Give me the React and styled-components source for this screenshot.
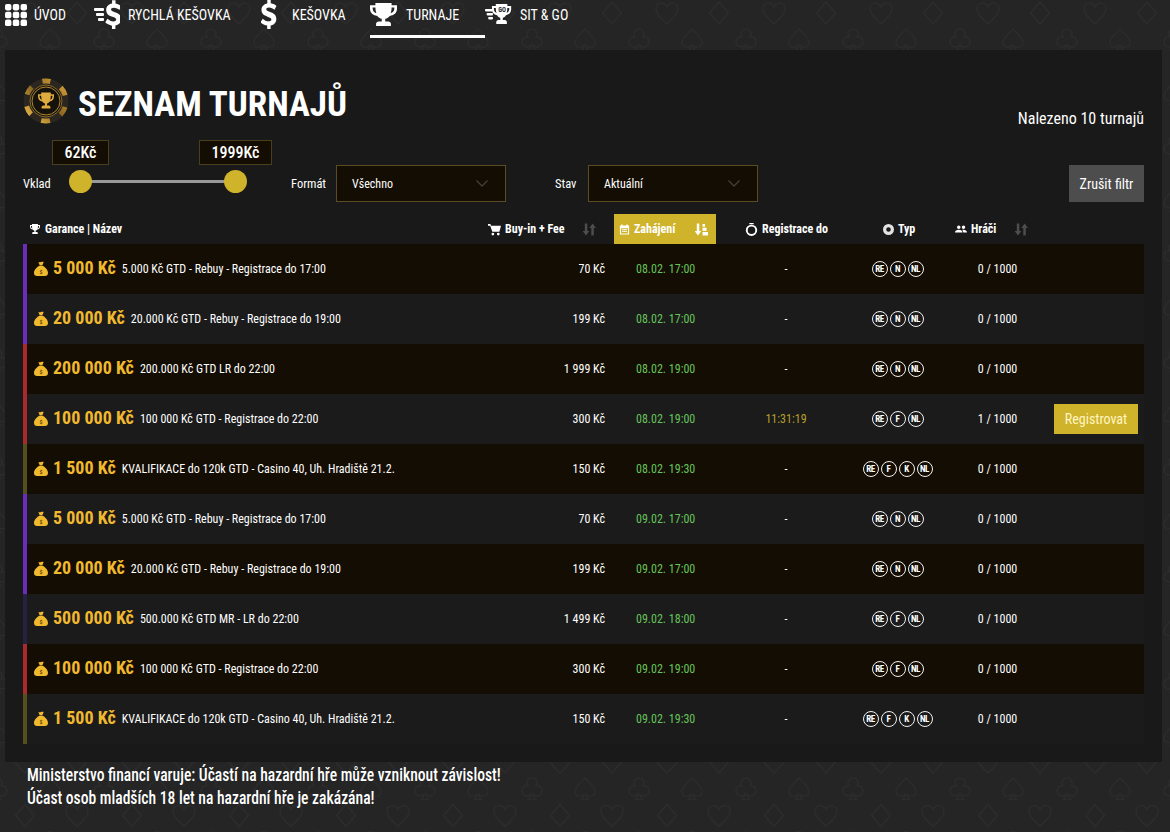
import React from "react";
import styled, { createGlobalStyle } from "styled-components";

const heart = "M0 11C-7 4-11 1-11-4.500c0-6 8-7.500 11-1.500 3-6 11-4.500 11 1.500C11 1 7 4 0 11z";
const diamond = "M0-11L9.500 0 0 11-9.500 0z";
const spade = "M0-11C4-6 10-3 10 2.500c0 5-6 6-9 3 0 2 1 4 2.500 5h-7C-2 9.500-1 7.500-1 5.500c-3 3-9 2-9-3C-10-3-4-6 0-11z";
const club = "M0-11a5 5 0 0 1 4 8 5 5 0 1 1-3 8c0 2 1 4 2.500 5.500h-7C-2 9-1 7-1 5a5 5 0 1 1-3-8 5 5 0 0 1 4-8z";

const suit = (d, x, y) => `<path transform='translate(${x} ${y})' d='${d}'/>`;
const pattern = encodeURIComponent(
	`<svg xmlns='http://www.w3.org/2000/svg' width='107' height='107' fill='none' stroke='#2c2c2c' stroke-width='1.2'>` +
	suit(heart, 25, 13) + suit(diamond, 77, 13) +
	suit(spade, 50, 40) + suit(club, 104, 40) + suit(club, -3, 40) +
	suit(diamond, 25, 66.5) + suit(heart, 77, 66.5) +
	suit(club, 50, 93.5) + suit(spade, 104, 93.5) + suit(spade, -3, 93.5) +
	`</svg>`
);

const GlobalStyle = createGlobalStyle`
	body {
		margin: 0;
		background: #252525 url("data:image/svg+xml,${pattern}");
		color: #fff;
		font-family: "Roboto", "Liberation Sans", sans-serif;
		font-stretch: 75%;
	}
`;

const Page = styled.div`
	width: 1170px;
	height: 832px;
	overflow: hidden;
`;

const Nav = styled.nav`
	display: flex;
	height: 38px;
	padding-left: 5px;
	margin-bottom: 12px;
`;

const NavItem = styled.a`
	display: flex;
	align-items: center;
	width: ${(p) => p.$w}px;
	height: 38px;
	gap: ${(p) => p.$gap}px;
	padding-bottom: 6px;
	box-sizing: border-box;
	font-size: 14px;
	white-space: nowrap;
	border-bottom: 3px solid ${(p) => (p.$active ? "#fff" : "transparent")};
`;

const Panel = styled.main`
	width: 1157px;
	height: 712px;
	margin-left: 5px;
	padding: 28px 18px 0;
	box-sizing: border-box;
	background: #191919;
`;

const TitleRow = styled.div`
	display: flex;
	align-items: center;
	justify-content: space-between;
	height: 50px;
`;

const Title = styled.h1`
	display: flex;
	align-items: center;
	gap: 9px;
	margin: 2px 0 0;
	font-size: 35px;
	font-weight: 700;
`;

const ChipWrap = styled.span`
	display: flex;
	margin-bottom: 6px;
`;

const Found = styled.div`
	margin-top: 30px;
	font-size: 16px;
`;

const Filters = styled.div`
	display: flex;
	align-items: flex-end;
	height: 62px;
	margin-top: 12px;
`;

const FilterLabel = styled.label`
	flex: none;
	width: ${(p) => p.$w}px;
	align-self: center;
	margin-top: 24px;
	font-size: 12.5px;
`;

const Slider = styled.div`
	position: relative;
	flex: none;
	width: 178px;
	height: 62px;
	margin-right: 44px;
`;

const Track = styled.div`
	position: absolute;
	left: 12px;
	right: 12px;
	top: 40px;
	height: 3px;
	background: #999;
`;

const Knob = styled.div`
	position: absolute;
	top: 30px;
	left: ${(p) => p.$x}px;
	width: 23px;
	height: 23px;
	border-radius: 50%;
	background: #cfb32b;
`;

const Bubble = styled.div`
	position: absolute;
	top: 0;
	left: ${(p) => p.$x}px;
	width: ${(p) => p.$w}px;
	height: 25px;
	box-sizing: border-box;
	border: 1px solid #4a3f1d;
	background: #140d03;
	font-size: 16px;
	font-weight: 500;
	line-height: 23px;
	text-align: center;
`;

const Select = styled.div`
	display: flex;
	align-items: center;
	justify-content: space-between;
	flex: none;
	width: 170px;
	height: 37px;
	box-sizing: border-box;
	margin-right: ${(p) => p.$mr}px;
	padding: 0 17px 0 15px;
	border: 1px solid #5a4c20;
	background: #140d03;
	font-size: 12px;
`;

const ClearButton = styled.button`
	margin-left: auto;
	width: 75px;
	height: 37px;
	border: 0;
	padding: 0;
	background: #4d4d4d;
	color: #fff;
	font: inherit;
	font-stretch: 75%;
	font-size: 14px;
`;

const columns = "463px 128px 102px 140px 85px 90px 1fr";

const HeadRow = styled.div`
	display: grid;
	grid-template-columns: ${columns};
	height: 30px;
	margin-top: 12px;
	font-size: 12px;
	font-weight: 700;
`;

const HeadCell = styled.div`
	display: flex;
	align-items: center;
	gap: 4px;
	padding-left: ${(p) => p.$pad || 0}px;
	background: ${(p) => (p.$active ? "#cfb32b" : "transparent")};
`;

const Sort = styled.span`
	display: flex;
	margin-left: auto;
	margin-right: ${(p) => p.$mr}px;
	color: ${(p) => (p.$active ? "#fff" : "#4d4d4d")};
`;

const Row = styled.div`
	display: grid;
	grid-template-columns: ${columns};
	align-items: center;
	height: 50px;
	box-sizing: border-box;
	border-left: 4px solid ${(p) => p.$accent};
	background: ${(p) => (p.$odd ? "#140d03" : "#1b1b1b")};
	font-size: 12px;
`;

const NameCell = styled.div`
	display: flex;
	align-items: center;
	padding-left: 6px;
	white-space: nowrap;
`;

const Guarantee = styled.span`
	margin: 0 6px 3px 4px;
	color: #f0b92e;
	font-size: 18px;
	font-weight: 700;
`;

const Price = styled.div`
	text-align: right;
	padding-right: 13px;
`;

const Start = styled.div`
	color: #66c45a;
	padding-left: 18px;
`;

const Deadline = styled.div`
	text-align: center;
	padding-right: 8px;
	color: ${(p) => (p.$live ? "#b89f2a" : "#fff")};
`;

const Badges = styled.div`
	display: flex;
	justify-content: center;
	gap: 2px;
	padding-right: 10px;
`;

const Badge = styled.span`
	display: flex;
	align-items: center;
	justify-content: center;
	width: 16px;
	height: 16px;
	box-sizing: border-box;
	border: 1.5px solid #f2f2f2;
	border-radius: 50%;
	font-size: 9px;
	font-weight: 700;
	letter-spacing: -0.4px;
`;

const Players = styled.div`
	text-align: center;
	padding-left: 15px;
`;

const RegisterCell = styled.div`
	display: flex;
	justify-content: flex-end;
	padding-right: 6px;
`;

const RegisterButton = styled.button`
	width: 84px;
	height: 30px;
	border: 0;
	background: #cfb32b;
	color: #fff6c4;
	font: inherit;
	font-stretch: 75%;
	font-size: 14px;
`;

const Warning = styled.p`
	width: 1000px;
	margin: 2px 0 0 27px;
	font-size: 18.5px;
	line-height: 23px;
	font-weight: 500;
	transform: scaleX(0.843);
	transform-origin: left;
`;

const Icon = ({ size = 16, children, viewBox = "0 0 24 24" }) => (
	<svg width={size} height={size} viewBox={viewBox} fill="currentColor" style={{ flex: "none" }}>
		{children}
	</svg>
);

const trophyPath = "M6 2h12v2h4v3c0 3.500-2.300 5.800-5.400 6.200-.8 1.300-2 2.200-3.300 2.500V18h2.200c1.200 0 2 1 2 2v2H6.500v-2c0-1 .8-2 2-2h2.200v-2.300c-1.300-.3-2.500-1.200-3.300-2.500C4.300 12.800 2 10.500 2 7V4h4V2zm0 4H4v1c0 1.900 1 3.300 2.700 3.900C6.200 9.500 6 7.800 6 6zm12 0c0 1.800-.2 3.500-.7 4.900C19 10.300 20 8.900 20 7V6h-2z";

const GridIcon = () => (
	<Icon size={22} viewBox="0 0 24 24">
		{[0, 8.500, 17].map((y) =>
			[0, 8.500, 17].map((x) => <rect key={`${x}-${y}`} x={x} y={y} width="7" height="7" rx="2" />)
		)}
	</Icon>
);

const dollarPath = "M10.500 1h3v2.600c2.300.3 4 1.200 5 2.200l-1.700 3c-1.200-1-2.900-1.800-4.800-1.800-1.600 0-2.400.6-2.400 1.400 0 1 1.100 1.400 3.300 2.100 3.400 1 5.500 2.400 5.500 5.500 0 2.800-2 4.700-5 5.200V24h-3v-2.700c-2.400-.3-4.500-1.300-5.800-2.600l1.900-2.900c1.400 1.200 3.300 2.100 5.100 2.100 1.700 0 2.500-.6 2.500-1.500 0-1-1-1.500-3.400-2.200-3.200-.9-5.300-2.300-5.300-5.400 0-2.700 2-4.600 5.100-5.100V1z";

const SpeedLines = () => (
	<g>
		<rect x="0" y="0" width="10" height="3" rx="1" />
		<rect x="2" y="5" width="8" height="3" rx="1" />
		<rect x="4" y="10" width="6" height="3" rx="1" />
	</g>
);

const FastCashIcon = () => (
	<svg width="26" height="29" viewBox="0 0 26 29" fill="currentColor" style={{ flex: "none" }}>
		<g transform="translate(6 -1) scale(1.150 1.250)"><path d={dollarPath} /></g>
		<g transform="translate(0 8)"><SpeedLines /></g>
	</svg>
);

const CashIcon = () => (
	<svg width="16" height="29" viewBox="5 1 14 23" preserveAspectRatio="none" fill="currentColor" style={{ flex: "none" }}>
		<path d={dollarPath} />
	</svg>
);

const NavTrophy = () => (
	<svg width="27" height="23" viewBox="2 2 20 20" preserveAspectRatio="none" fill="currentColor" style={{ flex: "none" }}>
		<path d={trophyPath} />
	</svg>
);

const TrophyIcon = ({ size = 12 }) => (
	<Icon size={size}><path d={trophyPath} /></Icon>
);

const SitGoIcon = () => (
	<svg width="27" height="22" viewBox="0 0 27 22" fill="currentColor" style={{ flex: "none" }}>
		<g transform="translate(6 0) scale(.96 1)"><path d={trophyPath} transform="translate(-1 -2)" /></g>
		<g transform="translate(0 5) scale(.8)"><SpeedLines /></g>
		<text x="17" y="7.500" fontSize="6.500" fontWeight="700" textAnchor="middle" fill="#252525">GO</text>
	</svg>
);

const ChipLogo = () => (
	<svg width="46" height="46" viewBox="0 0 46 46">
		<defs>
			<linearGradient id="chipGold" x1="0" y1="0" x2="1" y2="1">
				<stop offset="0" stopColor="#f0c04a" />
				<stop offset="0.5" stopColor="#8a6420" />
				<stop offset="1" stopColor="#d9a33a" />
			</linearGradient>
		</defs>
		<circle cx="23" cy="23" r="22.500" fill="#2b2620" />
		<circle cx="23" cy="23" r="20" fill="none" stroke="url(#chipGold)" strokeWidth="5" strokeDasharray="9 11.940" strokeDashoffset="4.500" transform="rotate(-90 23 23)" />
		<circle cx="23" cy="23" r="16" fill="#15110b" stroke="#8a6a26" strokeWidth="1" />
		<circle cx="23" cy="23" r="14" fill="none" stroke="#d3a53e" strokeWidth="0.800" />
		<g transform="translate(13.400 13) scale(.8)" fill="#e0ab3e"><path d={trophyPath} /></g>
	</svg>
);

const MoneyBag = () => (
	<Icon size={16}>
		<path fill="#f0b92e" d="M8 1.500c1 .7 2 .7 4 0s3-.5 4 0l-2 4.700h-4L8 1.500zM9.600 7.300h4.800C18.500 9.500 22.500 14 22.500 18c0 2.800-1.800 4.500-4.500 4.500H6c-2.700 0-4.500-1.700-4.500-4.500 0-4 4-8.500 8.100-10.700z" />
		<text x="12" y="19.500" fontSize="9" fontWeight="700" textAnchor="middle" fill="#6b4c0c">$</text>
	</Icon>
);

const SortIcon = ({ stacked }) => (
	<svg width="13" height="13" viewBox="0 0 13 13" fill="currentColor">
		<path d="M1.800 .5h2.500v7.500h2L3 12.500-.3 8h2.100z" />
		{stacked ? (
			<g>
				<rect x="7.500" y="1" width="2.500" height="2.700" />
				<rect x="7.500" y="4.700" width="4" height="3.200" />
				<rect x="7.500" y="9" width="5.500" height="3.500" />
			</g>
		) : (
			<path d="M8.300 12.500h2.500V5h2.100L9.600.5 6.300 5h2z" />
		)}
	</svg>
);

const CartIcon = () => (
	<Icon size={13}>
		<path d="M0 2h4.500l1 3H24l-3 11H8L4 5H0zM9 18a2.500 2.500 0 1 1 0 5 2.500 2.500 0 0 1 0-5zm10 0a2.500 2.500 0 1 1 0 5 2.500 2.500 0 0 1 0-5z" />
	</Icon>
);

const CalendarIcon = () => (
	<Icon size={11}>
		<path fillRule="evenodd" d="M5 1h3v2h8V1h3v2h3v20H2V3h3zM4.500 9v11.500h15V9zM7 11h3v2.500H7zm3.500 0h3v2.500h-3zm3.500 0h3v2.500h-3zM7 15h3v2.500H7zm3.500 0h3v2.500h-3zm3.500 0h3v2.500h-3z" />
	</Icon>
);

const TimerIcon = () => (
	<Icon size={13}>
		<path fillRule="evenodd" d="M12 3a10.500 10.500 0 1 1 0 21 10.500 10.500 0 0 1 0-21zm0 3.500a7 7 0 1 0 0 14 7 7 0 0 0 0-14zM8 0h8v2.500H8z" />
	</Icon>
);

const TypeIcon = () => (
	<Icon size={11}>
		<path fillRule="evenodd" fill="#e2e2e2" d="M12 0a12 12 0 1 1 0 24 12 12 0 0 1 0-24zm0 7a5 5 0 1 0 0 10 5 5 0 0 0 0-10z" />
	</Icon>
);

const PlayersIcon = () => (
	<Icon size={12}>
		<path d="M7.500 5a3.500 3.500 0 1 1 0 7 3.500 3.500 0 0 1 0-7zm9.500 0a3.500 3.500 0 1 1 0 7 3.500 3.500 0 0 1 0-7zM0 19c0-3.500 3-5.500 7.500-5.500S15 15.500 15 19zm16.500 0c0-2-.7-3.800-2-5.200C19 12.800 24 15 24 19z" />
	</Icon>
);

const Chevron = () => (
	<svg width="12" height="7" viewBox="0 0 12 7" fill="none" stroke="#45412f" strokeWidth="1.300">
		<path d="M.5.500l5.500 5.500L11.500.500" />
	</svg>
);

const NAV = [
	{ label: "ÚVOD", icon: <GridIcon />, w: 89, gap: 7 },
	{ label: "RYCHLÁ KEŠOVKA", icon: <FastCashIcon />, w: 167, gap: 8 },
	{ label: "KEŠOVKA", icon: <CashIcon />, w: 109, gap: 15 },
	{ label: "TURNAJE", icon: <NavTrophy />, w: 115, gap: 9 },
	{ label: "SIT & GO", icon: <SitGoIcon />, w: 100, gap: 8 },
];

const PURPLE = "#6b2bbb";
const RED = "#a82a2a";
const OLIVE = "#53501d";
const NAVY = "#24223f";

const TOURNAMENTS = [
	{ g: "5 000 Kč", n: "5.000 Kč GTD - Rebuy - Registrace do 17:00", p: "70 Kč", d: "08.02. 17:00", t: ["RE", "N", "NL"], c: PURPLE },
	{ g: "20 000 Kč", n: "20.000 Kč GTD - Rebuy - Registrace do 19:00", p: "199 Kč", d: "08.02. 17:00", t: ["RE", "N", "NL"], c: PURPLE },
	{ g: "200 000 Kč", n: "200.000 Kč GTD LR do 22:00", p: "1 999 Kč", d: "08.02. 19:00", t: ["RE", "N", "NL"], c: RED },
	{ g: "100 000 Kč", n: "100 000 Kč GTD - Registrace do 22:00", p: "300 Kč", d: "08.02. 19:00", t: ["RE", "F", "NL"], c: RED, until: "11:31:19", players: "1 / 1000", open: true },
	{ g: "1 500 Kč", n: "KVALIFIKACE do 120k GTD - Casino 40, Uh. Hradiště 21.2.", p: "150 Kč", d: "08.02. 19:30", t: ["RE", "F", "K", "NL"], c: OLIVE },
	{ g: "5 000 Kč", n: "5.000 Kč GTD - Rebuy - Registrace do 17:00", p: "70 Kč", d: "09.02. 17:00", t: ["RE", "N", "NL"], c: PURPLE },
	{ g: "20 000 Kč", n: "20.000 Kč GTD - Rebuy - Registrace do 19:00", p: "199 Kč", d: "09.02. 17:00", t: ["RE", "N", "NL"], c: PURPLE },
	{ g: "500 000 Kč", n: "500.000 Kč GTD MR - LR do 22:00", p: "1 499 Kč", d: "09.02. 18:00", t: ["RE", "F", "NL"], c: NAVY },
	{ g: "100 000 Kč", n: "100 000 Kč GTD - Registrace do 22:00", p: "300 Kč", d: "09.02. 19:00", t: ["RE", "F", "NL"], c: RED },
	{ g: "1 500 Kč", n: "KVALIFIKACE do 120k GTD - Casino 40, Uh. Hradiště 21.2.", p: "150 Kč", d: "09.02. 19:30", t: ["RE", "F", "K", "NL"], c: OLIVE },
];

const App = () => (
	<Page>
		<GlobalStyle />
		<Nav>
			{NAV.map((item) => (
				<NavItem key={item.label} $w={item.w} $gap={item.gap} $active={item.label === "TURNAJE"}>
					{item.icon}
					{item.label}
				</NavItem>
			))}
		</Nav>
		<Panel>
			<TitleRow>
				<Title><ChipWrap><ChipLogo /></ChipWrap>SEZNAM TURNAJŮ</Title>
				<Found>Nalezeno 10 turnajů</Found>
			</TitleRow>
			<Filters>
				<FilterLabel $w={46}>Vklad</FilterLabel>
				<Slider>
					<Track />
					<Knob $x={0} />
					<Knob $x={155} />
					<Bubble $x={-17} $w={57}>62Kč</Bubble>
					<Bubble $x={130} $w={73}>1999Kč</Bubble>
				</Slider>
				<FilterLabel $w={45}>Formát</FilterLabel>
				<Select $mr={49}>Všechno<Chevron /></Select>
				<FilterLabel $w={33}>Stav</FilterLabel>
				<Select $mr={0}>Aktuální<Chevron /></Select>
				<ClearButton>Zrušit filtr</ClearButton>
			</Filters>
			<HeadRow>
				<HeadCell $pad={6}><TrophyIcon />Garance | Název</HeadCell>
				<HeadCell $pad={2}><CartIcon />Buy-in + Fee<Sort $mr={18}><SortIcon /></Sort></HeadCell>
				<HeadCell $active $pad={5}><CalendarIcon />Zahájení<Sort $active $mr={8}><SortIcon stacked /></Sort></HeadCell>
				<HeadCell $pad={29}><TimerIcon />Registrace do</HeadCell>
				<HeadCell $pad={27}><TypeIcon />Typ</HeadCell>
				<HeadCell $pad={14}><PlayersIcon />Hráči<Sort $mr={3}><SortIcon /></Sort></HeadCell>
				<HeadCell />
			</HeadRow>
			{TOURNAMENTS.map((row, i) => (
				<Row key={i} $accent={row.c} $odd={i % 2 === 0}>
					<NameCell><MoneyBag /><Guarantee>{row.g}</Guarantee>{row.n}</NameCell>
					<Price>{row.p}</Price>
					<Start>{row.d}</Start>
					<Deadline $live={!!row.until}>{row.until || "-"}</Deadline>
					<Badges>{row.t.map((t) => <Badge key={t}>{t}</Badge>)}</Badges>
					<Players>{row.players || "0 / 1000"}</Players>
					<RegisterCell>{row.open && <RegisterButton>Registrovat</RegisterButton>}</RegisterCell>
				</Row>
			))}
		</Panel>
		<Warning>
			Ministerstvo financí varuje: Účastí na hazardní hře může vzniknout závislost!<br />
			Účast osob mladších 18 let na hazardní hře je zakázána!
		</Warning>
	</Page>
);

export default App;
